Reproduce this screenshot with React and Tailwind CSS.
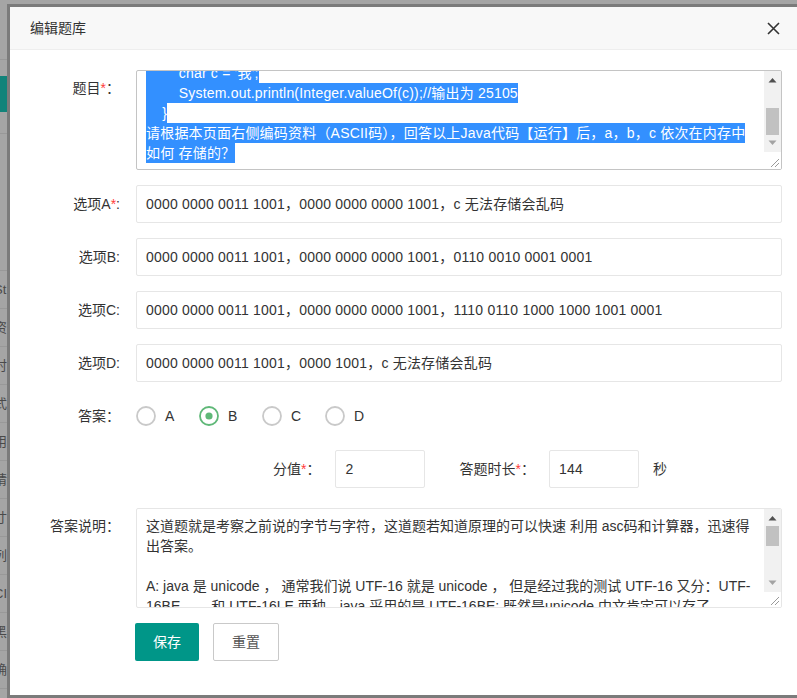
import React from 'react';

const bgRows = ['St', '资', '时', '式,', '用', '请', '寸,', '列', 'CI', '黑', '确'];

function Req() {
  return <span className="text-[#ff3b3b]">*</span>;
}

function Label({ children, top }) {
  return (
    <div
      className={`w-[110px] shrink-0 text-right text-[14px] leading-[20px] text-[#333] ${
        top ? 'pt-[8px]' : 'flex items-center justify-end'
      }`}
    >
      <span>{children}</span>
    </div>
  );
}

function Scrollbar({ thumbTop, thumbHeight, trackHeight }) {
  return (
    <div className="absolute right-0 top-0 bottom-0 w-[17px] flex flex-col">
      <div className="relative bg-[#f1f1f1]" style={{ height: trackHeight }}>
        <svg className="absolute left-[4px] top-[6px]" width="9" height="6" viewBox="0 0 9 6">
          <path d="M0.5 5.5 L4.5 1 L8.5 5.5 Z" fill="#505050" />
        </svg>
        <div
          className="absolute left-[2px] w-[13px] bg-[#c1c1c1]"
          style={{ top: thumbTop, height: thumbHeight }}
        />
        <svg className="absolute left-[4px] bottom-[6px]" width="9" height="6" viewBox="0 0 9 6">
          <path d="M0.5 0.5 L4.5 5 L8.5 0.5 Z" fill="#a3a3a3" />
        </svg>
      </div>
      <div className="relative flex-1 bg-white">
        <svg className="absolute right-[1px] bottom-[1px]" width="12" height="12" viewBox="0 0 12 12">
          <path d="M11 3 L3 11 M11 7 L7 11" stroke="#9a9a9a" strokeWidth="1" />
        </svg>
      </div>
    </div>
  );
}

function Sel({ children }) {
  return <span className="bg-[#3390ff] text-white py-[2px] whitespace-pre">{children}</span>;
}

function TextInput({ value, className = 'w-[646px]' }) {
  return (
    <div
      className={`${className} h-[38px] border border-[#e6e6e6] rounded-[2px] bg-white pl-[9px] flex items-center text-[14px] text-[#333] tracking-[0.2px] whitespace-nowrap overflow-hidden`}
    >
      {value}
    </div>
  );
}

function Radio({ label, checked }) {
  return (
    <div className="w-[63px] flex items-center gap-[9px] text-[14px] text-[#333]">
      <svg width="20" height="20" viewBox="0 0 20 20">
        <circle cx="10" cy="10" r="9" fill="white" stroke={checked ? '#5fb878' : '#c9c9c9'} strokeWidth="1.8" />
        {checked && <circle cx="10" cy="10" r="3.6" fill="#5fb878" />}
      </svg>
      <span>{label}</span>
    </div>
  );
}

export default function App() {
  return (
    <div className="relative w-[797px] h-[698px] overflow-hidden bg-[#a5a5a5] [font-family:'Liberation_Sans','Noto_Sans_CJK_SC',sans-serif]">
      {/* page behind the dialog */}
      <div className="w-[40px] flex flex-col">
        <div className="h-[60px] border-b border-[#989898]" />
        <div className="h-[16px]" />
        <div className="h-[36px] bg-[#12837a]" />
        <div className="h-[22px] border-b border-[#989898]" />
        <div className="h-[137px] border-b border-[#989898]" />
        {bgRows.map((t) => (
          <div
            key={t}
            className="h-[38px] border-b border-[#999999] flex items-center text-[13px] text-[#4a4a4a] -ml-[6px] whitespace-nowrap"
          >
            {t}
          </div>
        ))}
      </div>

      {/* dialog */}
      <div className="absolute top-[4px] left-[7px] w-[800px] h-[694px] border-[3px] border-[#7b7b7b] bg-white flex flex-col">
        <div className="h-[43px] shrink-0 bg-[#f8f8f8] border-b border-[#eeeeee] flex items-center pl-[20px] pr-[24px] justify-between">
          <span className="text-[14px] text-[#333]">编辑题库</span>
          <svg width="13" height="13" viewBox="0 0 13 13">
            <path d="M1 1 L12 12 M12 1 L1 12" stroke="#333" strokeWidth="1.6" />
          </svg>
        </div>

        <div className="pt-[20px] flex flex-col gap-[15px]">
          <div className="flex gap-[16px]">
            <Label top>
              题目<Req />：
            </Label>
            <div className="relative w-[646px] h-[100px] border border-[#c4c4c4] rounded-[2px] overflow-hidden text-[14px] leading-[20px] tracking-[0.2px]">
              <div className="-mt-[8px] pl-[9px] pr-[26px]">
                <div className="h-[20px]"><Sel>{"        char c = '我';"}</Sel></div>
                <div className="h-[20px]"><Sel>{'        System.out.println(Integer.valueOf(c));//输出为 25105'}</Sel></div>
                <div className="h-[20px]"><Sel>{'    }'}</Sel></div>
                <div className="h-[20px] whitespace-nowrap"><Sel>请根据本页面右侧编码资料（ASCII码），回答以上Java代码【运行】后，a，b，c 依次在内存中</Sel></div>
                <div className="h-[20px]"><Sel>如何 存储的？</Sel></div>
              </div>
              <Scrollbar thumbTop={37} thumbHeight={27} trackHeight={81} />
            </div>
          </div>

          <div className="flex gap-[16px]">
            <Label>
              选项A<Req />:
            </Label>
            <TextInput value="0000 0000 0011 1001，0000 0000 0000 1001，c 无法存储会乱码" />
          </div>
          <div className="flex gap-[16px]">
            <Label>选项B:</Label>
            <TextInput value="0000 0000 0011 1001，0000 0000 0000 1001，0110 0010 0001 0001" />
          </div>
          <div className="flex gap-[16px]">
            <Label>选项C:</Label>
            <TextInput value="0000 0000 0011 1001，0000 0000 0000 1001，1110 0110 1000 1000 1001 0001" />
          </div>
          <div className="flex gap-[16px]">
            <Label>选项D:</Label>
            <TextInput value="0000 0000 0011 1001，0000 1001，c 无法存储会乱码" />
          </div>

          <div className="flex gap-[16px] h-[38px]">
            <Label>答案：</Label>
            <div className="flex items-center">
              <Radio label="A" />
              <Radio label="B" checked />
              <Radio label="C" />
              <Radio label="D" />
            </div>
          </div>

          <div className="flex items-center h-[38px] pl-[263px] mb-[5px] text-[14px] text-[#333]">
            <span>
              分值<Req />：
            </span>
            <TextInput value="2" className="w-[90px] ml-[15px]" />
            <span className="ml-[34px]">
              答题时长<Req />：
            </span>
            <TextInput value="144" className="w-[90px] ml-[14px]" />
            <span className="ml-[14px]">秒</span>
          </div>

          <div className="flex gap-[16px]">
            <Label top>答案说明：</Label>
            <div className="relative w-[646px] h-[100px] border border-[#e6e6e6] rounded-[2px] overflow-hidden text-[14px] leading-[20px] text-[#333]">
              <div className="pt-[7px] pl-[9px] pr-[26px] whitespace-nowrap">
                <div className="h-[20px]">这道题就是考察之前说的字节与字符，这道题若知道原理的可以快速 利用 asc码和计算器，迅速得</div>
                <div className="h-[20px]">出答案。</div>
                <div className="h-[20px]" />
                <div className="h-[20px]">A: java 是 unicode ， 通常我们说 UTF-16 就是 unicode ， 但是经过我的测试 UTF-16 又分：UTF-</div>
                <div className="h-[20px] whitespace-pre">16BE        和 UTF-16LE 两种，java 采用的是 UTF-16BE; 既然是unicode 中文肯定可以存了</div>
              </div>
              <Scrollbar thumbTop={17} thumbHeight={20} trackHeight={83} />
            </div>
          </div>

          <div className="flex gap-[14px] pl-[125px]">
            <button className="h-[38px] px-[18px] bg-[#009688] text-white text-[14px] rounded-[2px]">保存</button>
            <button className="h-[38px] px-[18px] border border-[#c9c9c9] bg-white text-[#555] text-[14px] rounded-[2px]">重置</button>
          </div>
        </div>
      </div>
    </div>
  );
}
